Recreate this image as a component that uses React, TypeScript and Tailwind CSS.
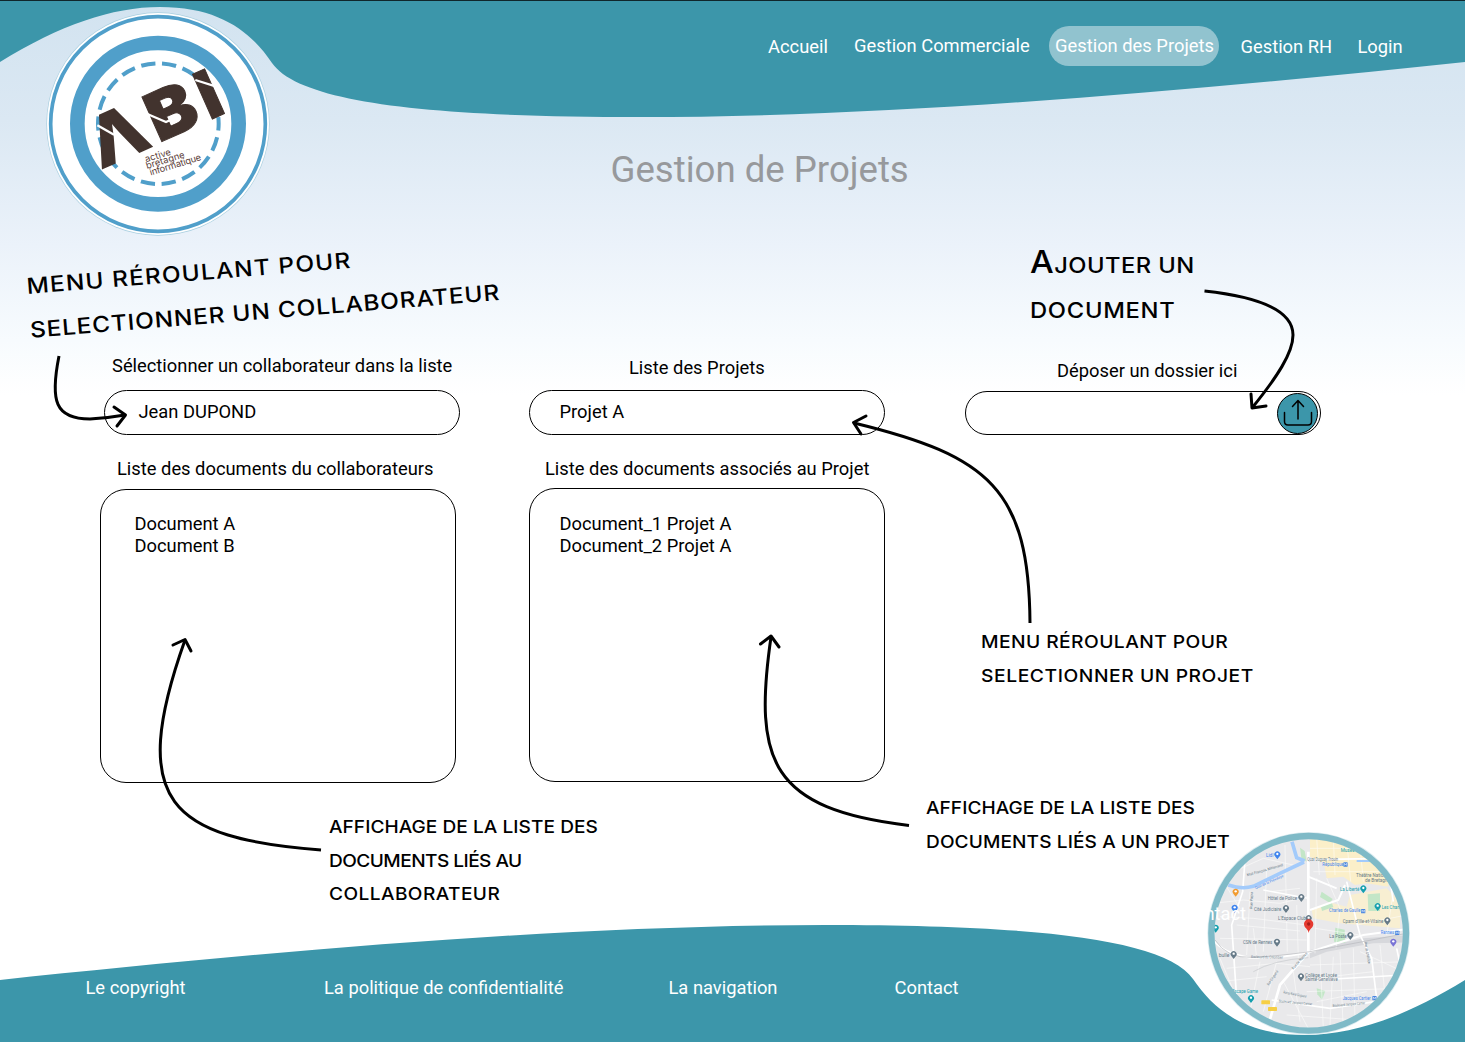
import React from "react";

const WAVE =
  "M0,0 L0,62 C60,25 112,7 160,7 C220,7 251,32 272,63 C300,103 430,117 640,117 C900,117 1200,90 1465,62 L1465,0 Z";

function Wave({ className }: { className: string }) {
  return (
    <svg className={className} width="1465" height="120" viewBox="0 0 1465 120" aria-hidden="true">
      <path d={WAVE} fill="#3c96aa" />
    </svg>
  );
}

function Logo() {
  return (
    <svg className="absolute left-[40px] top-0" width="240" height="240" viewBox="0 0 720 720">
      <circle cx="354" cy="372" r="335" fill="#a9cfe0" />
      <circle cx="354" cy="372" r="333" fill="#fff" />
      <circle cx="354" cy="372" r="322" fill="none" stroke="#509fca" strokeWidth="11" />
      <circle cx="354" cy="371" r="242" fill="none" stroke="#509fca" strokeWidth="44" />
      <circle
        cx="355"
        cy="371"
        r="181"
        fill="none"
        stroke="#509fca"
        strokeWidth="12"
        strokeDasharray="43 20.2"
        strokeDashoffset="22"
      />
      <g
        transform="translate(190 503) rotate(-24)"
        fontFamily="Inter, sans-serif"
        fontWeight="900"
        fontSize="202"
        fill="#42332e"
        stroke="#42332e"
        strokeWidth="3"
      >
        <text x="-6" y="0" textLength="168" lengthAdjust="spacingAndGlyphs" fontWeight="700" strokeWidth="7">Λ</text>
        <text x="182" y="0" textLength="146" lengthAdjust="spacingAndGlyphs">B</text>
        <text x="349" y="0">I</text>
      </g>
      <g stroke="#fff" strokeWidth="7" fill="none">
        <path d="M172 376 L222 404" />
        <path d="M322 342 L378 366 L404 354" />
        <path d="M466 240 L536 262" />
      </g>
      <g
        fontFamily="Inter, sans-serif"
        fontSize="28"
        fill="#5b4039"
        transform="translate(318 487) rotate(-17)"
      >
        <text x="0" y="0" textLength="80">active</text>
        <text x="-3" y="20" textLength="120">bretagne</text>
        <text x="2" y="42" textLength="160">informatique</text>
      </g>
    </svg>
  );
}

type Tone = "gray" | "blue" | "teal" | "orange" | "violet";
const TONES: Record<Tone, string> = {
  gray: "#667a88",
  blue: "#3f84ee",
  teal: "#159fae",
  orange: "#f29b2e",
  violet: "#7a74d6",
};

const PLACES: { t: string; x: number; y: number; w: number; c: Tone; r?: number }[] = [
  { t: "Lidl", x: 198, y: 96, w: 22, c: "blue" },
  { t: "Musée", x: 422, y: 82, w: 42, c: "teal" },
  { t: "République", x: 367, y: 123, w: 64, c: "blue" },
  { t: "Quai Duguay Trouin", x: 322, y: 107, w: 92, c: "gray" },
  { t: "Théâtre National", x: 468, y: 157, w: 100, c: "gray" },
  { t: "de Bretagne", x: 495, y: 171, w: 75, c: "gray" },
  { t: "La Liberté", x: 420, y: 199, w: 58, c: "teal" },
  { t: "Hôtel de Police", x: 203, y: 224, w: 88, c: "gray" },
  { t: "Cité Judiciaire", x: 162, y: 257, w: 82, c: "gray" },
  { t: "L'Espace Club", x: 234, y: 286, w: 84, c: "gray" },
  { t: "Charles de Gaulle", x: 387, y: 262, w: 94, c: "blue" },
  { t: "Les Champs", x: 545, y: 252, w: 72, c: "teal" },
  { t: "Cpam d'Ille-et-Vilaine", x: 428, y: 293, w: 122, c: "gray" },
  { t: "La Poste", x: 388, y: 338, w: 52, c: "gray" },
  { t: "Rennes", x: 542, y: 328, w: 40, c: "blue" },
  { t: "CSN de Rennes", x: 129, y: 358, w: 88, c: "gray" },
  { t: "bulle", x: 56, y: 395, w: 32, c: "gray" },
  { t: "Collège et Lycée", x: 315, y: 455, w: 96, c: "gray" },
  { t: "Sainte-Geneviève", x: 315, y: 468, w: 98, c: "gray" },
  { t: "Jacques Cartier", x: 428, y: 525, w: 84, c: "blue" },
  { t: "Escape Game", x: 96, y: 504, w: 78, c: "teal" },
  { t: "Boulevard du Colombier", x: 153, y: 399, w: 96, c: "gray", r: 1 },
  { t: "Boulevard Jacques Cartier", x: 236, y: 532, w: 100, c: "gray", r: 5 },
  { t: "Boulevard Jacques Cartier", x: 398, y: 546, w: 98, c: "gray", r: -5 },
  { t: "Rue de Riaval Ginguené", x: 250, y: 505, w: 70, c: "gray", r: 11 },
  { t: "Mail François Mitterrand", x: 142, y: 154, w: 112, c: "gray", r: -16 },
  { t: "Quai de la Prévalaye", x: 167, y: 193, w: 92, c: "blue", r: -24 },
  { t: "Rue de Nantes", x: 280, y: 434, w: 64, c: "gray", r: -48 },
  { t: "Rue de Châtillon", x: 493, y: 352, w: 66, c: "gray", r: 80 },
  { t: "Rue Ginguené", x: 206, y: 482, w: 52, c: "gray", r: -55 },
  { t: "Rue Papu", x: 157, y: 252, w: 50, c: "gray", r: -88 },
];

const PINS: { x: number; y: number; c: Tone }[] = [
  { x: 232, y: 89, c: "blue" },
  { x: 490, y: 191, c: "teal" },
  { x: 107, y: 201, c: "orange" },
  { x: 304, y: 217, c: "gray" },
  { x: 258, y: 250, c: "gray" },
  { x: 104, y: 249, c: "blue" },
  { x: 326, y: 280, c: "gray" },
  { x: 533, y: 244, c: "teal" },
  { x: 562, y: 287, c: "gray" },
  { x: 451, y: 331, c: "gray" },
  { x: 47, y: 309, c: "teal" },
  { x: 231, y: 351, c: "gray" },
  { x: 101, y: 388, c: "gray" },
  { x: 580, y: 351, c: "violet" },
  { x: 303, y: 455, c: "gray" },
  { x: 153, y: 520, c: "teal" },
];

const METROS = [
  { x: 430, y: 112 },
  { x: 483, y: 252 },
  { x: 585, y: 317 },
  { x: 517, y: 513 },
];

function LocationMap() {
  return (
    <svg className="absolute left-[1200px] top-[825px]" width="220" height="217" viewBox="0 0 660 651">
      <defs>
        <clipPath id="disc">
          <circle cx="326" cy="325" r="290" />
        </clipPath>
      </defs>
      <circle cx="326" cy="325" r="304" fill="#dcecf0" />
      <g clipPath="url(#disc)">
        <rect width="660" height="651" fill="#e9e9eb" />
        <path d="M330 30 H500 L560 130 L565 185 L500 175 L465 180 L430 155 L380 160 L372 115 L330 95 Z" fill="#fbefc9" />
        <path d="M335 255 L400 235 L440 245 L450 210 L560 190 L600 230 V310 L420 295 L340 280 Z" fill="#f8efd2" />
        <path d="M330 375 L490 340 L625 330 V352 L520 355 L380 380 L330 400 Z" fill="#d7d8dc" />
        <g fill="#c3e6c7">
          <path d="M300 68 L314 78 L320 110 L304 100 Z" />
          <path d="M365 200 L398 222 L390 234 L360 216 Z" />
          <path d="M362 242 L395 232 L400 246 L366 258 Z" />
          <path d="M406 308 L434 314 L436 353 L402 350 Z" />
          <path d="M503 208 L540 205 V258 H505 Z" />
          <path d="M350 490 L376 498 L366 524 L352 508 Z" />
        </g>
        <g fill="none" stroke="#fff" strokeWidth="2" opacity=".75">
          <path d="M40 235 L130 225 L240 235 L325 215 M60 275 L160 280 L320 300 M150 200 L140 390 M200 130 L190 380 M255 60 L262 380 M60 340 L320 345 M110 300 L300 318 M80 430 L230 415 L330 425 M60 470 L200 455 M180 410 L150 560 M230 410 L190 560 M60 400 L110 520" />
          <path d="M350 160 L345 385 M380 160 L420 250 L408 370 M345 310 L480 330 M420 380 L430 620 M460 370 L465 590 M540 360 L560 560 M330 420 L620 410 M320 500 L600 490 M260 570 L540 590 M250 470 L330 620 M350 40 L358 150 M400 40 L405 150 M440 45 L452 170 M480 60 L490 170 M330 70 H520 M340 140 H560 M100 140 L190 100 L280 120" />
          <path d="M360 390 L370 610 M400 395 L390 600 M480 380 L610 440 M345 460 L520 440 M350 530 L500 500 M280 440 L300 590 M70 170 L120 250 M210 200 L300 190 M160 310 L170 400 M290 240 L295 400 M580 200 L560 330 M620 270 L470 300" />
        </g>
        <g fill="none" stroke="#fff">
          <path d="M325 80 V380" strokeWidth="8" />
          <path d="M135 105 L128 200 L95 300 L110 520" strokeWidth="5" />
          <path d="M325 155 L410 190 M330 255 L415 225 L435 180" strokeWidth="6" />
          <path d="M40 345 Q70 385 150 398 Q250 400 330 380 L490 330 L625 312" strokeWidth="6" />
          <path d="M325 382 L240 480 L205 600" strokeWidth="8" />
          <path d="M440 170 L480 330 L515 400 L540 600" strokeWidth="5" />
          <path d="M350 465 L610 450 M215 525 L390 550 L590 520 M590 370 L605 440" strokeWidth="5" />
          <path d="M190 195 L325 220" strokeWidth="4" />
          <path d="M330 104 L560 100 L580 230" strokeWidth="5" />
        </g>
        <path d="M45 345 Q80 400 155 397 T330 380 L620 325" fill="none" stroke="#b6b8bd" strokeWidth="2" />
        <path d="M160 440 Q220 405 325 398" fill="none" stroke="#c6c8cb" strokeWidth="2" />
        <g fill="none" stroke="#a3cbfb" strokeWidth="11">
          <path d="M85 180 Q125 194 160 184 L240 145 L312 111" />
          <path d="M276 50 L290 98 L314 108" />
          <path d="M470 108 H535" strokeWidth="6" />
        </g>
        <g fontFamily="Roboto, sans-serif">
          {PLACES.map((p, i) => (
            <text
              key={i}
              transform={`translate(${p.x} ${p.y}) rotate(${p.r ?? 0})`}
              textLength={p.w}
              lengthAdjust="spacingAndGlyphs"
              fill={TONES[p.c]}
              fontSize={p.r ? 11 : 14}
            >
              {p.t}
            </text>
          ))}
        </g>
        {PINS.map((p, i) => (
          <g key={i} transform={`translate(${p.x} ${p.y})`}>
            <path d="M0 14 L-7 5 A9 9 0 1 1 7 5 Z" fill={TONES[p.c]} />
            <circle cx="0" cy="-2" r="3.5" fill="#fff" />
          </g>
        ))}
        {METROS.map((m, i) => (
          <g key={i}>
            <rect x={m.x} y={m.y} width="13" height="13" rx="2" fill="#4a86e0" />
            <path d={`M${m.x + 3} ${m.y + 10} v-7 l3.5 5 l3.5 -5 v7`} stroke="#fff" strokeWidth="1.5" fill="none" />
          </g>
        ))}
        <rect x="184" y="526" width="26" height="12" rx="2" fill="#f6cf45" />
        <rect x="204" y="546" width="27" height="12" rx="2" fill="#f6cf45" />
        <path d="M326 324 C324 311 312 309 312 297 A14 14 0 1 1 340 297 C340 309 328 311 326 324 Z" fill="#e53a30" />
        <circle cx="326" cy="297" r="5" fill="#a51d1a" />
      </g>
      <circle cx="326" cy="325" r="292" fill="none" stroke="#7fbac7" strokeWidth="19" />
    </svg>
  );
}

function Arrows() {
  return (
    <svg
      className="pointer-events-none absolute left-0 top-0"
      width="1465"
      height="1042"
      viewBox="0 0 1465 1042"
      fill="none"
      stroke="#000"
      strokeWidth="3"
      aria-hidden="true"
    >
      <path d="M59 356 C50 401 55 419 90 419 Q108 418 125 415" />
      <path d="M114 407 L125.500 415 L117 426" strokeLinecap="round" strokeLinejoin="round" />
      <path d="M1204.500 291 C1260 297 1293 311 1293 335 C1293 353 1277 377 1252 408" />
      <path d="M1251 394 L1252 408 L1266 406" strokeLinecap="round" strokeLinejoin="round" />
      <path d="M1030 623 C1029 490 990 456 854 423" />
      <path d="M866 416 L853.500 422.500 L861 434" strokeLinecap="round" strokeLinejoin="round" />
      <path d="M321 850 C170 838 127 803 185 640" />
      <path d="M173 645 L185 639.500 L191 651" strokeLinecap="round" strokeLinejoin="round" />
      <path d="M909 825.500 C771 809 753 762 771 637" />
      <path d="M760.500 644 L771 636 L779 647" strokeLinecap="round" strokeLinejoin="round" />
    </svg>
  );
}

const NOTE =
  "absolute origin-top-left whitespace-nowrap font-['Inter'] font-medium uppercase text-black";

function Field({ children, className }: { children?: React.ReactNode; className: string }) {
  return (
    <div className={`flex w-[356px] rounded-full border border-black bg-white ${className}`}>
      {children}
    </div>
  );
}

export default function App() {
  return (
    <div className="relative flex h-[1042px] w-[1465px] flex-col overflow-hidden bg-white bg-[linear-gradient(180deg,#d2e3f0_0px,#dbe8f3_120px,#ebf2fa_245px,#f7fbfe_340px,#ffffff_395px)] font-['Roboto',sans-serif] text-[18.33px] tracking-normal text-black">
      <Wave className="absolute left-0 top-0" />
      <Wave className="absolute bottom-0 left-0 rotate-180" />

      <header className="relative flex h-[118px] items-start border-t border-[#10262b] pl-[768px] pt-[25px] text-white">
        <nav className="flex items-center whitespace-nowrap">
          <a className="w-[86px] pt-px">Accueil</a>
          <a className="w-[195px] pb-px">Gestion Commerciale</a>
          <a className="flex h-[40px] w-[170px] items-center justify-center rounded-[20px] bg-[#91c3cf] pb-px pl-px">
            Gestion des Projets
          </a>
          <a className="w-[138.500px] pl-[21.500px] pt-px">Gestion RH</a>
          <a className="pt-px">Login</a>
        </nav>
      </header>

      <h1 className="relative mt-[27px] pl-[610.500px] text-[36.6px] leading-[50px] text-[#97999c]">
        Gestion de Projets
      </h1>

      <main className="relative mt-[160px] flex flex-1 items-start pl-[100px]">
        <section className="flex w-[429px] flex-col">
          <label className="pl-[12px] leading-[22px]">Sélectionner un collaborateur dans la liste</label>
          <Field className="ml-[4px] mt-[13px] h-[45px] items-center pb-[2px] pl-[33.500px]">Jean DUPOND</Field>
          <label className="mt-[23px] pl-[17px] leading-[22px]">Liste des documents du collaborateurs</label>
          <ul className="mt-[9px] h-[294px] w-[356px] rounded-[26px] border border-black pl-[33.500px] pt-[22.700px] leading-[22.5px]">
            <li>Document A</li>
            <li>Document B</li>
          </ul>
        </section>

        <section className="flex w-[436px] flex-col">
          <label className="pl-[100px] pt-[2px] leading-[22px]">Liste des Projets</label>
          <Field className="mt-[11px] h-[45px] items-center pb-[2px] pl-[29.500px]">Projet A</Field>
          <label className="mt-[23px] pl-[16px] leading-[22px]">Liste des documents associés au Projet</label>
          <ul className="mt-[8px] h-[294px] w-[356px] rounded-[26px] border border-black pl-[29.500px] pt-[23.700px] leading-[22.5px]">
            <li>Document_1 Projet A</li>
            <li>Document_2 Projet A</li>
          </ul>
        </section>

        <section className="flex w-[356px] flex-col">
          <label className="pl-[92px] pt-[5px] leading-[22px]">Déposer un dossier ici</label>
          <Field className="mt-[9px] h-[44px] items-center justify-end pr-[2px]">
            <button className="flex size-[41px] items-center justify-center rounded-full border border-black bg-[#3c96aa]">
              <svg width="30" height="30" viewBox="0 0 30 30" fill="none" stroke="#000" strokeWidth="1.500" strokeLinecap="round" strokeLinejoin="round">
                <path d="M15 21 V3 M9.500 8.500 L15 2.500 L20.500 8.500" />
                <path d="M1.500 14.500 V23.500 Q1.500 27 5 27 H25 Q28.500 27 28.500 23.500 V14.500" />
              </svg>
            </button>
          </Field>
        </section>
      </main>

      <footer className="relative flex h-[65px] pl-[85.500px] leading-[22px] text-white">
        <a className="w-[238.500px]">Le copyright</a>
        <a className="w-[344.500px]">La politique de confidentialité</a>
        <a className="w-[226px]">La navigation</a>
        <a>Contact</a>
      </footer>

      <Logo />
      <LocationMap />
      <span className="absolute left-[1182px] top-[903px] leading-[22px] text-white">Contact</span>
      <Arrows />

      <div className={`${NOTE} left-[25px] top-[267px] -rotate-[4.600deg] scale-x-[1.11] text-[22px] leading-[44px]`}>
        <div className="-mt-[3px] tracking-[1.050px]">menu réroulant pour</div>
        <div className="tracking-[0.750px]">selectionner un collaborateur</div>
      </div>
      <div className={`${NOTE} left-[1030px] top-[243px] scale-x-[1.08] text-[22px] leading-[45px]`}>
        <div className="tracking-[0.400px]"><span className="text-[31px] leading-none">A</span>jouter un</div>
        <div className="tracking-[0.650px]">document</div>
      </div>
      <div className={`${NOTE} left-[981px] top-[625px] scale-x-[1.1] text-[17.500px] leading-[33.500px]`}>
        <div className="tracking-[0.380px]">menu réroulant pour</div>
        <div className="tracking-[0.520px]">selectionner un projet</div>
      </div>
      <div className={`${NOTE} left-[926px] top-[791px] scale-x-[1.09] text-[17.500px] leading-[33.500px]`}>
        <div className="tracking-[0.040px]">affichage de la liste des</div>
        <div className="tracking-[0.100px]">documents liés a un projet</div>
      </div>
      <div className={`${NOTE} left-[329px] top-[810px] scale-x-[1.09] text-[17.500px] leading-[33.500px]`}>
        <div className="tracking-[0.040px]">affichage de la liste des</div>
        <div className="-tracking-[0.500px]">documents liés au</div>
        <div className="tracking-[0.400px]">collaborateur</div>
      </div>
    </div>
  );
}
